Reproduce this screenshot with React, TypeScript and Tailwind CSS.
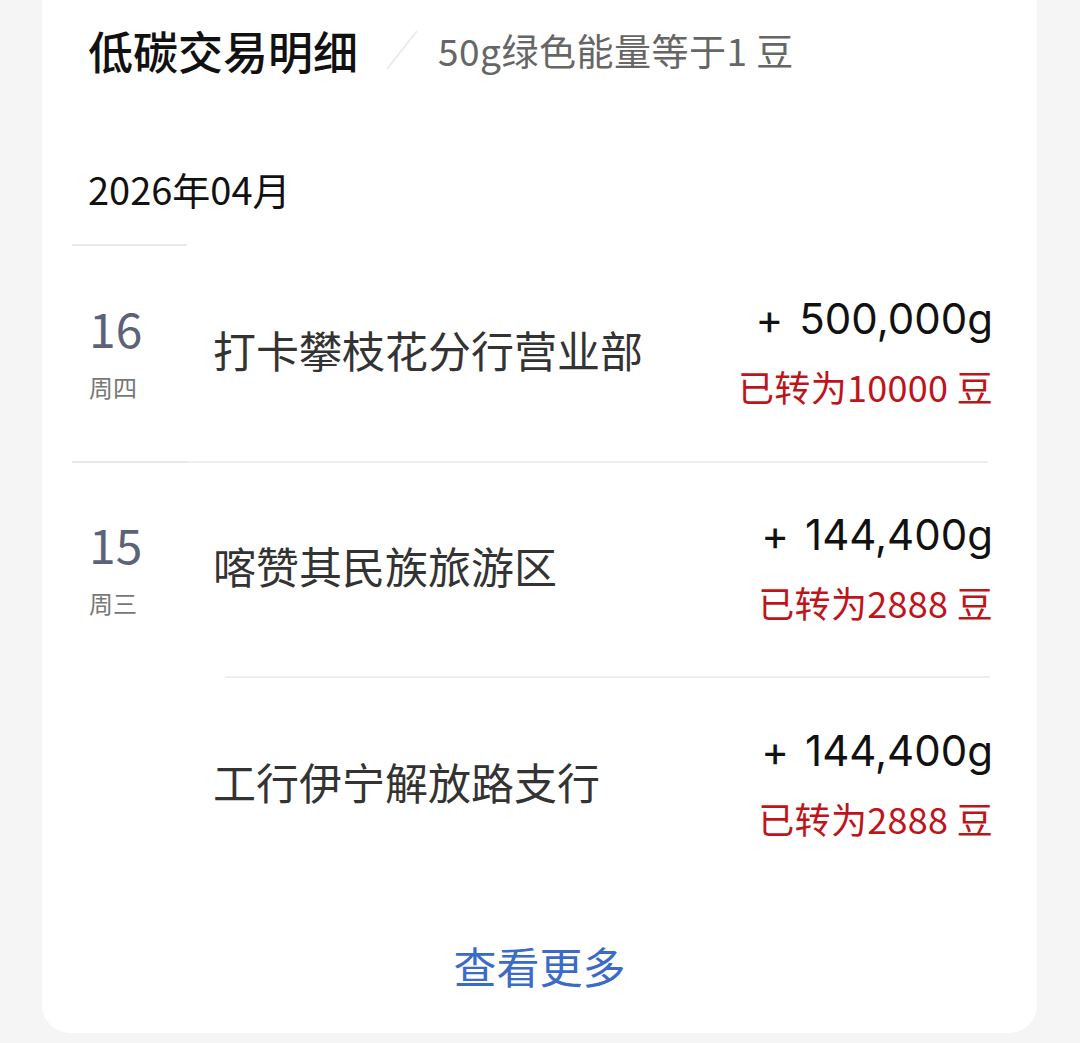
import React from "react";

type Item = {
  day?: string;
  week?: string;
  name: string;
  amount: string;
  beans: string;
  dateLine: boolean;
  itemLine: boolean;
  lineOffset: string;
  height: string;
};

const items: Item[] = [
  { day: "16", week: "周四", name: "打卡攀枝花分行营业部", amount: "500,000g", beans: "已转为10000 豆", dateLine: true, itemLine: false, lineOffset: "ml-0 mr-[5px]", height: "h-[215px]" },
  { day: "15", week: "周三", name: "喀赞其民族旅游区", amount: "144,400g", beans: "已转为2888 豆", dateLine: true, itemLine: true, lineOffset: "ml-0 mr-[5px]", height: "h-[213px]" },
  { name: "工行伊宁解放路支行", amount: "144,400g", beans: "已转为2888 豆", dateLine: false, itemLine: true, lineOffset: "ml-[38px] mr-[3px]", height: "h-[215px]" },
];

const font = { fontFamily: '"Noto Sans CJK SC", "Noto Sans", sans-serif' };
const numFont = { fontFamily: 'Inter, "Noto Sans CJK SC", sans-serif' };

export default function App() {
  return (
    <div className="min-h-screen bg-[#f5f5f5] px-[42px] pb-[10px]" style={font}>
      <div className="w-[995px] bg-white rounded-b-[28px]">
        {/* header */}
        <div className="flex h-[100px] items-center pl-[46px]">
          <h3 className="text-[45px] leading-none font-medium text-[#111]">低碳交易明细</h3>
          <svg width="36" height="44" viewBox="0 0 36 44" className="ml-[26px] mr-[18px]">
            <line x1="3" y1="41" x2="33" y2="3" stroke="#ebebeb" strokeWidth="2" />
          </svg>
          <span className="text-[37px] leading-none tracking-[0.5px] text-[#666]">50g绿色能量等于1 豆</span>
        </div>

        {/* month */}
        <div className="pl-[46px] pt-[70px] pb-[36px] text-[38px] leading-[38px] text-[#111]">2026年04月</div>

        {/* list */}
        <div className="pl-[30px] pr-[44px]">
          {items.map((it, i) => (
            <div key={i}>
              <div className="flex h-[2px]">
                <div className={`w-[115px] ${it.dateLine ? "bg-[#e8e8e8]" : ""}`} />
                <div className={`flex-1 ${it.lineOffset} ${it.itemLine ? "bg-[#eeeeee]" : ""}`} />
              </div>
              <div className={`flex items-center ${it.height}`}>
                <div className="w-[115px] pl-[17px] flex flex-col">
                  {it.day && (
                    <>
                      <span className="text-[48px] leading-[48px] text-[#5c6378]">{it.day}</span>
                      <span className="mt-[24px] mb-[5px] text-[24px] leading-[24px] text-[#777]">{it.week}</span>
                    </>
                  )}
                </div>
                <div className="flex flex-1 items-center justify-between pl-[26px]">
                  <span className="pb-[8px] text-[43px] leading-none text-[#333]">{it.name}</span>
                  <div className="flex flex-col items-end">
                    <div className="flex text-[42px] leading-[44px] text-[#111]" style={numFont}>
                      <span>+</span>
                      <span className="ml-[16px]">{it.amount}</span>
                    </div>
                    <span className="mt-[27px] mb-[7px] text-[36px] leading-[36px] tracking-[0.3px] text-[#c0141b]">{it.beans}</span>
                  </div>
                </div>
              </div>
            </div>
          ))}
        </div>

        {/* more */}
        <div className="flex justify-center pt-[51px] pb-[46px]">
          <button className="text-[43px] leading-[43px] text-[#3a6bc9]">查看更多</button>
        </div>
      </div>
    </div>
  );
}
